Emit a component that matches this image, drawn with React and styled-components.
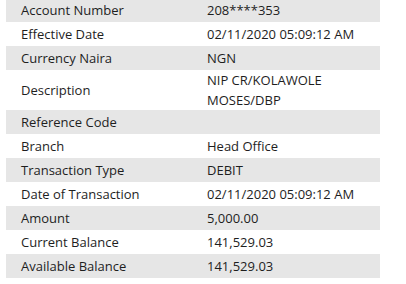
import styled, { createGlobalStyle } from "styled-components";

const GlobalStyle = createGlobalStyle`
  html, body {
    margin: 0;
    padding: 0;
    background: #fff;
  }
`;

const Table = styled.div`
  width: 374px;
  margin: -2px 0 0 6px;
  font-family: "Open Sans", "Noto Sans", sans-serif;
  font-size: 13px;
  color: #1e1e1e;
`;

const Row = styled.div`
  display: grid;
  grid-template-columns: 186px 1fr;
  align-items: center;
  min-height: 24px;
  background: ${({ $shaded }) => ($shaded ? "#e6e6e6" : "#fff")};
`;

const Cell = styled.div`
  padding: 0 6px 0 15px;
  line-height: 20px;
`;

const Value = styled(Cell)`
  max-width: 170px;
`;

const details = [
  ["Account Number", "208****353"],
  ["Effective Date", "02/11/2020 05:09:12 AM"],
  ["Currency Naira", "NGN"],
  ["Description", "NIP CR/KOLAWOLE MOSES/DBP"],
  ["Reference Code", ""],
  ["Branch", "Head Office"],
  ["Transaction Type", "DEBIT"],
  ["Date of Transaction", "02/11/2020 05:09:12 AM"],
  ["Amount", "5,000.00"],
  ["Current Balance", "141,529.03"],
  ["Available Balance", "141,529.03"],
];

export default function App() {
  return (
    <>
      <GlobalStyle />
      <Table>
        {details.map(([label, value], i) => (
          <Row key={label} $shaded={i % 2 === 0}>
            <Cell>{label}</Cell>
            <Value>{value}</Value>
          </Row>
        ))}
      </Table>
    </>
  );
}
